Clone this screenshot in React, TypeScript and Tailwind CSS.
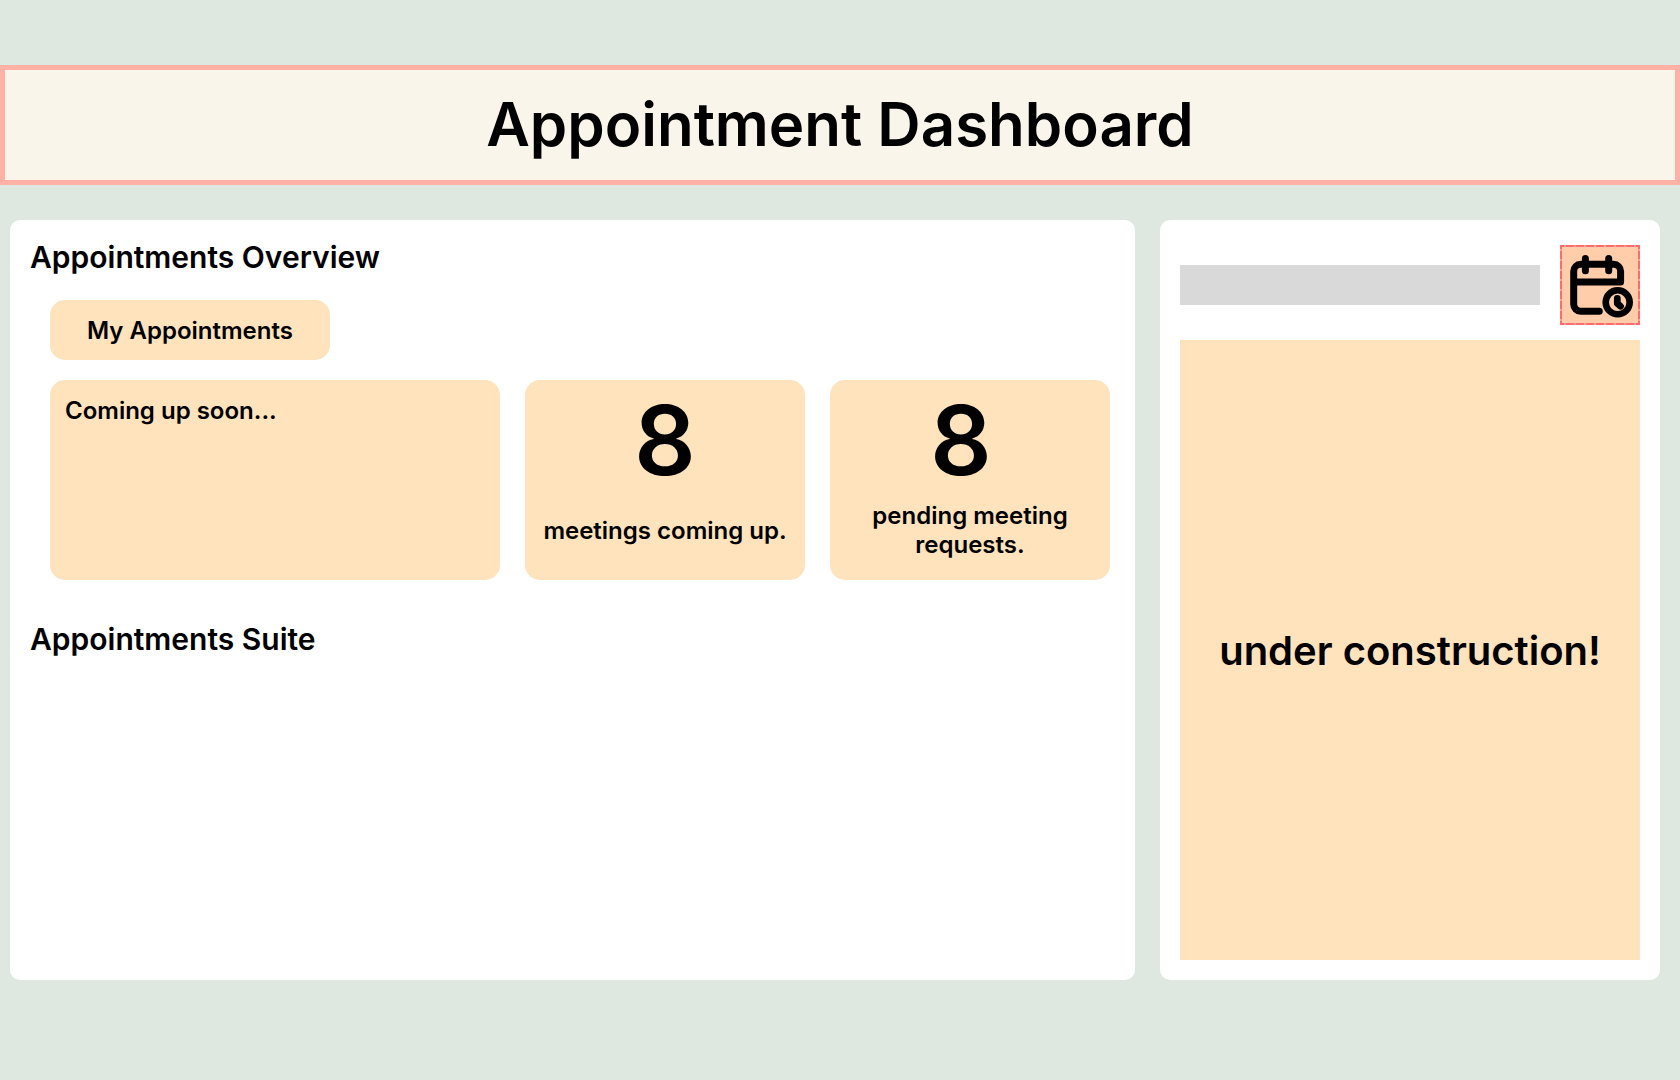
import React from "react";

function CalendarClockIcon() {
  return (
    <svg
      viewBox="0 0 80 80"
      className="block size-20 shrink-0"
      fill="none"
      strokeLinecap="round"
      strokeLinejoin="round"
      aria-hidden="true"
    >
      <rect width="80" height="80" fill="#ffcda9" />
      <rect x="1" y="1" width="78" height="78" stroke="#ffa08f" strokeWidth="2" strokeLinejoin="miter" />
      <g stroke="#ff6b6f" strokeWidth="2" strokeLinecap="butt" strokeDasharray="8 2">
        <path d="M-4 1H80M-4 79H80M1 -4V80M79 -4V80" />
      </g>
      <g stroke="#000" strokeWidth="7">
        <path d="M39.3 66.3H20.7a7 7 0 0 1-7-7V26.3a7 7 0 0 1 7-7H53.6a7 7 0 0 1 7 7V37H13.7" />
        <path d="M25.4 13.6V25.8M48.7 13.6V25.8" />
        <circle cx="57.7" cy="57.3" r="12" strokeWidth="6.6" />
        <path d="M57.3 53.4V58.4L60.5 61.2" strokeWidth="6.8" />
      </g>
    </svg>
  );
}

export default function App() {
  return (
    <div className="flex min-h-screen flex-col bg-[#dee8e0] pt-[65px] pb-[100px] font-['Inter',sans-serif] font-semibold text-black">
      <header className="border-5 border-[#ffb1a6] bg-[#faf5ea] pt-[17px] pb-[19px]">
        <h1 className="text-center text-6xl leading-[74px]">Appointment Dashboard</h1>
      </header>

      <main className="mt-[35px] grid flex-1 grid-cols-[9fr_4fr] gap-[25px] pr-5 pl-2.5">
        <section className="rounded-[10px] bg-white px-5 pt-[19px]">
          <h2 className="text-3xl leading-9">Appointments Overview</h2>
          <div className="mt-[25px] ml-5 flex flex-col items-start gap-5">
            <button type="button" className="h-15 w-[280px] rounded-[15px] bg-[#ffe3bd] text-2xl leading-[29px]">
              My Appointments
            </button>
            <div className="grid w-full grid-cols-[450fr_280fr_280fr] gap-[25px] pr-[5px] text-2xl leading-[29px]">
              <article className="min-h-[200px] rounded-[15px] bg-[#ffe3bd] px-[15px] py-4">
                <h3>Coming up soon...</h3>
              </article>
              <article className="flex flex-col items-center rounded-[15px] bg-[#ffe3bd] text-center">
                <p className="text-8xl leading-[120px]">8</p>
                <p className="flex h-15 items-center">meetings coming up.</p>
              </article>
              <article className="flex flex-col items-center rounded-[15px] bg-[#ffe3bd] text-center">
                <p className="pr-[18px] text-8xl leading-[120px]">8</p>
                <p className="flex h-15 w-[220px] items-center">pending meeting requests.</p>
              </article>
            </div>
          </div>
          <h2 className="mt-[41px] text-3xl leading-9">Appointments Suite</h2>
        </section>

        <aside className="flex flex-col rounded-[10px] bg-white px-5 pt-[25px] pb-5">
          <div className="flex items-center gap-5">
            <div className="h-10 flex-1 bg-[#d9d9d9]" />
            <button type="button" aria-label="Schedule appointment">
              <CalendarClockIcon />
            </button>
          </div>
          <div className="mt-[15px] flex flex-1 items-center justify-center bg-[#ffe3bd] pt-0.5">
            <p className="text-[40px] leading-12">under construction!</p>
          </div>
        </aside>
      </main>
    </div>
  );
}
